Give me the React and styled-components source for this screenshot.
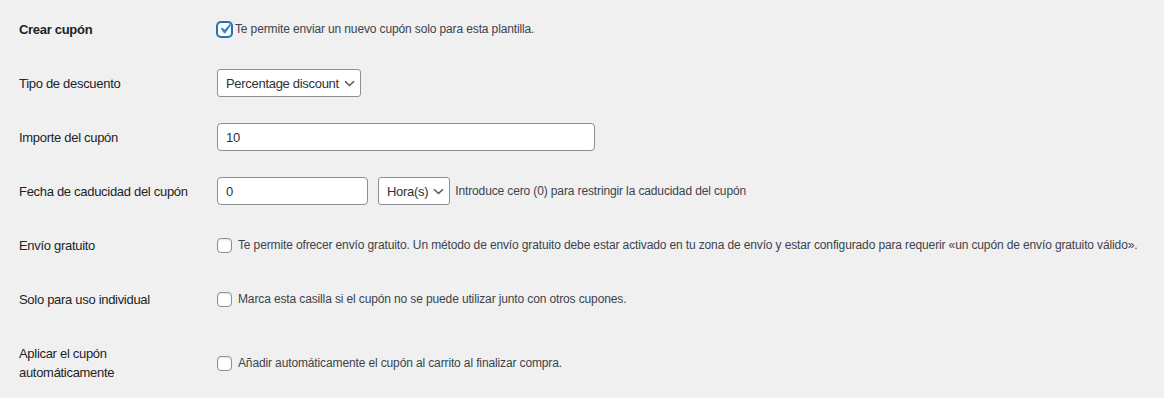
import React from 'react'
import styled, { createGlobalStyle } from 'styled-components'

const GlobalStyle = createGlobalStyle`
	body {
		margin: 0;
		background: #f0f0f1;
		font-family: 'Liberation Sans', Arial, sans-serif;
		font-size: 12px;
		letter-spacing: -0.13px;
		color: #3c434a;
	}
`

const Form = styled.div`
	padding: 2px 0 0 19px;
`

const Row = styled.div`
	display: grid;
	grid-template-columns: 198px 1fr;
	align-items: center;
	min-height: 54px;
	padding: ${(p) => (p.$tall ? '10px 0 9px' : '0')};
`

const Label = styled.div`
	color: #1d2327;
	font-size: 13px;
	letter-spacing: -0.3px;
	font-weight: ${(p) => (p.$bold ? 700 : 400)};
	line-height: 19px;
`

const Field = styled.label`
	display: flex;
	align-items: center;
	gap: ${(p) => p.$gap || 6}px;
	line-height: 19px;
	white-space: nowrap;
`

const Box = styled.span`
	box-sizing: border-box;
	width: 15px;
	height: 15px;
	flex: none;
	display: inline-flex;
	align-items: center;
	justify-content: center;
	background: #fff;
	border: 1px solid ${(p) => (p.$checked ? '#2271b1' : '#8c8f94')};
	border-radius: 4px;
	box-shadow: ${(p) => (p.$checked ? '0 0 0 1px #2271b1' : 'inset 0 1px 2px rgba(0,0,0,.1)')};

	svg {
		width: 20px;
		height: 20px;
		margin: -3px -4px;
	}
`

const Input = styled.input`
	box-sizing: border-box;
	width: ${(p) => p.$w}px;
	height: 28px;
	padding: 0 8px;
	border: 1px solid #8c8f94;
	border-radius: 4px;
	background: #fff;
	color: #2c3338;
	font: inherit;
	font-size: 13px;
	letter-spacing: -0.3px;
	outline: none;
`

const Select = styled.div`
	box-sizing: border-box;
	height: 28px;
	display: inline-flex;
	align-items: center;
	gap: 5px;
	padding: 0 5px 0 8px;
	border: 1px solid #8c8f94;
	border-radius: 3px;
	background: #fff;
	color: #2c3338;
	font-size: 13px;
	letter-spacing: -0.3px;
	white-space: nowrap;

	svg {
		width: 11px;
		height: 7px;
	}
`

const Inline = styled.div`
	display: flex;
	align-items: center;
	gap: ${(p) => p.$gap || 10}px;
`

const Help = styled.span`
	color: #3c434a;
	white-space: nowrap;
`

function Check({ checked }) {
	return (
		<Box $checked={checked}>
			{checked && (
				<svg viewBox='0 0 20 20'>
					<path d='M14.83 4.89l1.34.94-5.81 8.38H9.02L5.78 9.67l1.34-1.25 2.57 2.4z' fill='#3582c4' />
				</svg>
			)}
		</Box>
	)
}

function Chevron() {
	return (
		<svg viewBox='0 0 11 7'>
			<path d='M1 1.2l4.5 4.3L10 1.2' fill='none' stroke='#50575e' strokeWidth='1.5' />
		</svg>
	)
}

export default function App() {
	return (
		<>
			<GlobalStyle />
			<Form>
				<Row>
					<Label $bold>Crear cupón</Label>
					<Field $gap={3}>
						<Check checked />
						Te permite enviar un nuevo cupón solo para esta plantilla.
					</Field>
				</Row>
				<Row>
					<Label>Tipo de descuento</Label>
					<div>
						<Select>
							Percentage discount
							<Chevron />
						</Select>
					</div>
				</Row>
				<Row>
					<Label>Importe del cupón</Label>
					<div>
						<Input $w={378} defaultValue='10' />
					</div>
				</Row>
				<Row>
					<Label>Fecha de caducidad del cupón</Label>
					<Inline>
						<Input $w={151} defaultValue='0' />
						<Inline $gap={5}>
							<Select>
								Hora(s)
								<Chevron />
							</Select>
							<Help>Introduce cero (0) para restringir la caducidad del cupón</Help>
						</Inline>
					</Inline>
				</Row>
				<Row>
					<Label>Envío gratuito</Label>
					<Field>
						<Check />
						Te permite ofrecer envío gratuito. Un método de envío gratuito debe estar activado en tu zona de envío y estar configurado para requerir «un cupón de envío gratuito válido».
					</Field>
				</Row>
				<Row>
					<Label>Solo para uso individual</Label>
					<Field>
						<Check />
						Marca esta casilla si el cupón no se puede utilizar junto con otros cupones.
					</Field>
				</Row>
				<Row $tall>
					<Label>
						Aplicar el cupón
						<br />
						automáticamente
					</Label>
					<Field>
						<Check />
						Añadir automáticamente el cupón al carrito al finalizar compra.
					</Field>
				</Row>
			</Form>
		</>
	)
}
